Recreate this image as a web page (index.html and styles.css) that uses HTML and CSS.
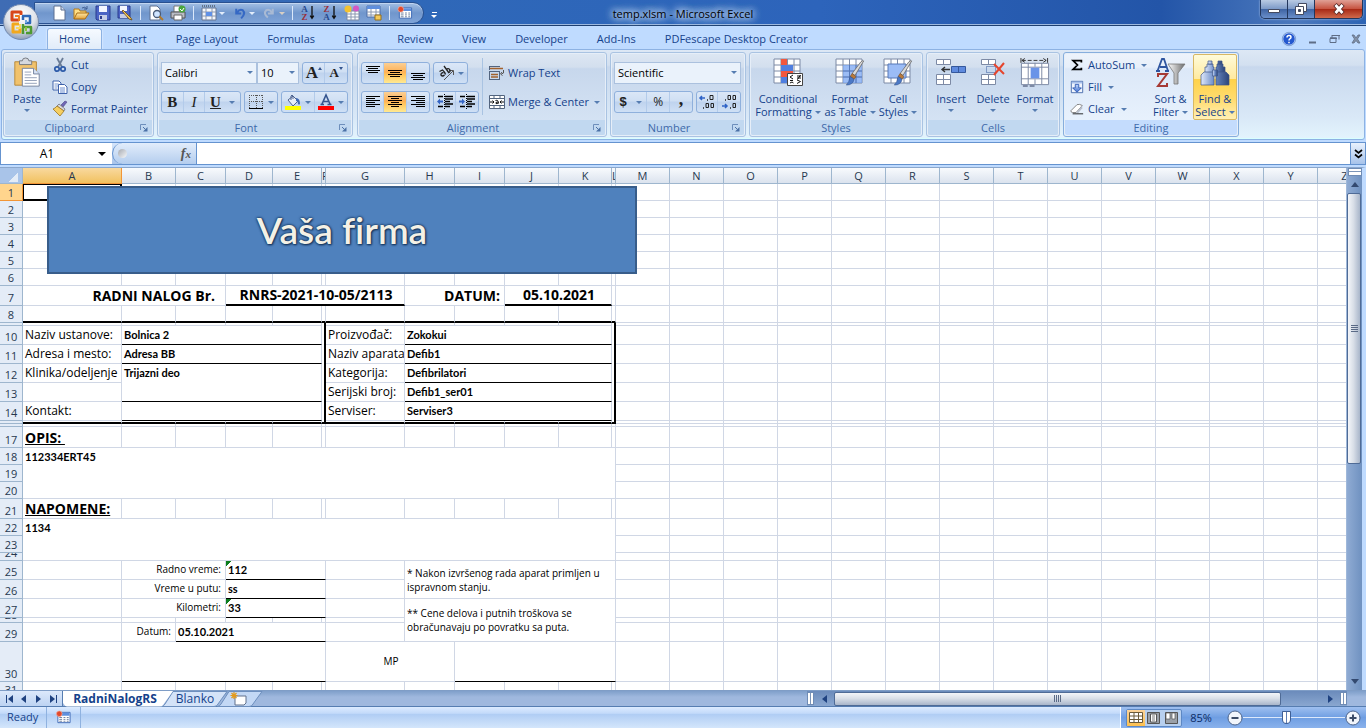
FILE: index.html
```html
<!DOCTYPE html>
<html lang="en">
<head>
<meta charset="utf-8">
<title>temp.xlsm - Microsoft Excel</title>
<link rel="stylesheet" href="styles.css">
</head>
<body>
<svg class="defs" aria-hidden="true">
  <defs>
    <linearGradient id="gBlue" x1="0" y1="0" x2="0" y2="1"><stop offset="0" stop-color="#c5d8fa"/><stop offset="1" stop-color="#3f6fd0"/></linearGradient>
    <linearGradient id="gGold" x1="0" y1="0" x2="0" y2="1"><stop offset="0" stop-color="#ffe9a6"/><stop offset="1" stop-color="#e2a13a"/></linearGradient>
    <linearGradient id="gGrey" x1="0" y1="0" x2="1" y2="0"><stop offset="0" stop-color="#fff"/><stop offset="1" stop-color="#6b6b6b"/></linearGradient>
    <linearGradient id="gSteel" x1="0" y1="0" x2="1" y2="0"><stop offset="0" stop-color="#dfe8fa"/><stop offset=".45" stop-color="#6f8fc9"/><stop offset="1" stop-color="#2c4479"/></linearGradient>
    <radialGradient id="gOrb" cx=".5" cy=".3" r=".7"><stop offset="0" stop-color="#fff"/><stop offset=".6" stop-color="#dfe3ea"/><stop offset="1" stop-color="#8e9db5"/></radialGradient>
    <symbol id="table-grid" viewBox="0 0 30 30">
      <path d="M1 1h26v24H1z" fill="#fff" stroke="#7d8aa5"/>
      <path d="M8 1v24M14.500 1v24M21 1v24M1 7h26M1 13h26M1 19h26" stroke="#7d8aa5" fill="none"/>
    </symbol>
    <symbol id="brush" viewBox="0 0 20 28">
      <path d="M19 1l-9 15-3-2L16 2q2-2 3-1z" fill="#d9d9d9" stroke="#666" stroke-width=".8"/>
      <path d="M7 14l4 3-2 3-4-3z" fill="#b97a3c" stroke="#7a4a1c" stroke-width=".6"/>
      <path d="M5 17l4 3q-1 6-8 6 3-3 4-9z" fill="#4c79c6" stroke="#2f508c" stroke-width=".6"/>
    </symbol>
    <symbol id="macro" viewBox="0 0 17 16">
      <path d="M2.500 2.500h13v11h-13z" fill="#fff" stroke="#3b67b5"/><path d="M3 3h12v3H3z" fill="#5f8fdd"/>
      <path d="M4 8h3M8.500 8h2M12 8h2M4 10h3M8.500 10h2M12 10h2M4 12h3M8.500 12h2M12 12h2" stroke="#6d7f9e"/>
      <circle cx="4" cy="4" r="3" fill="#e2492c" stroke="#f6b19f" stroke-width=".7"/>
    </symbol>
  </defs>
</svg>

<header class="titlebar">
  <button class="orb" aria-label="Office Button">
    <svg viewBox="0 0 38 38"><circle cx="19" cy="19" r="17.500" fill="url(#gOrb)" stroke="#7088b0"/>
      <g fill="none" stroke-linejoin="round">
        <path d="M17 17h-7V9h9v3" stroke="#d8461b" stroke-width="3"/><path d="M13 13h4v5" stroke="#ef7d1c" stroke-width="2"/>
        <path d="M21 17v-4h7v7h-5" stroke="#2b68b8" stroke-width="2.500"/><path d="M24 17v3" stroke="#6fa5de" stroke-width="2"/>
        <path d="M17 21h-6v8h7v-4" stroke="#f2a81c" stroke-width="3"/><path d="M14 25h4v-4" stroke="#fbd85b" stroke-width="2"/>
        <path d="M21 21v10M21 24h8v6h-5" stroke="#4d9a32" stroke-width="2.500"/><path d="M24 24v4" stroke="#8cc63f" stroke-width="2"/>
      </g>
    </svg>
  </button>
  <div class="qat">
    <button aria-label="New"><svg viewBox="0 0 16 16"><path d="M3 1h7l4 4v10H3z" fill="#fff" stroke="#5c6f90"/><path d="M10 1v4h4" fill="#cddaf0" stroke="#5c6f90"/></svg></button>
    <button aria-label="Open"><svg viewBox="0 0 16 16"><path d="M1 14V4h5l1 2h6v3" fill="#ffdf86" stroke="#b57a1a"/><path d="M1 14L4 8h12l-4 6z" fill="url(#gGold)" stroke="#a96d12"/><path d="M9 3q3-2 5 1m0-3v3h-3" fill="none" stroke="#3f5d92"/></svg></button>
    <button aria-label="Save"><svg viewBox="0 0 16 16"><path d="M1 1h14v14H2L1 14z" fill="#4a63c4" stroke="#2b3c8e"/><path d="M4 1h8v6H4z" fill="#f3f6ff"/><path d="M4 10h8v5H4z" fill="#c5cde6"/><path d="M5 11h2v3H5z" fill="#2b3c8e"/></svg></button>
    <button aria-label="Save As"><svg viewBox="0 0 16 16"><path d="M1 1h12v12H1z" fill="#4a63c4" stroke="#2b3c8e"/><path d="M3 1h7v5H3z" fill="#f3f6ff"/><path d="M3 9h7v4H3z" fill="#c5cde6"/><path d="M6 5l8 8 1 2-3-1-7-8z" fill="#f4c95a" stroke="#6b4a17" stroke-width=".8"/></svg></button>
    <i class="qsep"></i>
    <button aria-label="Print Preview"><svg viewBox="0 0 16 16"><path d="M2 1h7l3 3v11H2z" fill="#fff" stroke="#5c6f90"/><circle cx="9" cy="9" r="3.500" fill="#cfe4ff" stroke="#4a5b78" stroke-width="1.300"/><path d="M11.500 11.500L15 15" stroke="#b07a2b" stroke-width="2"/></svg></button>
    <button aria-label="Quick Print"><svg viewBox="0 0 16 16"><path d="M4 1h8v6H4z" fill="#fff" stroke="#777"/><path d="M1 7h14v6H1z" fill="#b9bcc4" stroke="#555"/><path d="M4 10h8v5H4z" fill="#fff" stroke="#666"/><circle cx="12" cy="4" r="3.500" fill="#4aa63d"/><path d="M10 4l2 2 2-3" fill="none" stroke="#fff"/></svg></button>
    <i class="qsep"></i>
    <button aria-label="Row Height"><svg viewBox="0 0 16 16"><path d="M1 3h14v12H1z" fill="#f3f6fb" stroke="#66758f"/><path d="M1 7h14M1 11h14M5 3v12M11 3v12" stroke="#8b98b0"/><path d="M5 7h6v4H5z" fill="#5f90e6"/><path d="M1 1h14" stroke="#333" stroke-dasharray="1 1"/></svg></button><i class="arrow light"></i>
    <button aria-label="Undo" class="undo"><svg viewBox="0 0 16 16"><path d="M4 2v6h6M5 7q3-5 7-3 4 4-2 10" fill="none" stroke="#3568c4" stroke-width="2.500"/></svg></button><i class="arrow light"></i>
    <button aria-label="Redo" class="redo"><svg viewBox="0 0 16 16"><path d="M12 2v6H6M11 7Q8 2 4 4q-4 4 2 9" fill="none" stroke="#a9bad4" stroke-width="2.500"/></svg></button><i class="arrow pale"></i>
    <i class="qsep"></i>
    <button aria-label="Sort Ascending" class="az"><span><b class="blue">A</b><b class="red">Z</b></span><svg viewBox="0 0 6 16"><path d="M3 0v14M1 11l2 3 2-3" fill="none" stroke="#111" stroke-width="1.500"/></svg></button>
    <button aria-label="Sort Descending" class="az"><span><b class="red">Z</b><b class="blue">A</b></span><svg viewBox="0 0 6 16"><path d="M3 0v14M1 11l2 3 2-3" fill="none" stroke="#111" stroke-width="1.500"/></svg></button>
    <button aria-label="Charts"><svg viewBox="0 0 16 16"><path d="M3 6h12v9H3z" fill="#fff" stroke="#7a89a5"/><path d="M3 9h12M3 12h12M7 6v9M11 6v9" stroke="#8b98b0"/><circle cx="4" cy="4" r="3.500" fill="#f4c22f"/><circle cx="12" cy="3.500" r="3" fill="#d457c4"/></svg></button>
    <button aria-label="Form"><svg viewBox="0 0 16 16"><path d="M1 1h13v11H1z" fill="#fff" stroke="#4b6ca8"/><path d="M1 1h13v3H1z" fill="#5f8fdd"/><path d="M1 7h13M1 10h13M5 4v8M10 4v8" stroke="#8b98b0"/><path d="M9 10h6v5H9z" fill="#f4c95a" stroke="#96701d"/></svg></button>
    <i class="qsep"></i>
    <button aria-label="Record Macro"><svg viewBox="0 0 17 16"><use href="#macro"/></svg></button>
  </div>
  <button class="qat-more" aria-label="Customize Quick Access Toolbar"><i></i><i class="arrow white"></i></button>
  <h1>temp.xlsm - Microsoft Excel</h1>
  <div class="winbtns">
    <button aria-label="Minimize"><svg viewBox="0 0 14 12"><path d="M1.500 6.500h11v3h-11z" fill="#fff" stroke="#444a60"/></svg></button>
    <button aria-label="Restore"><svg viewBox="0 0 14 12"><path d="M4.500.500h8v8h-8z" fill="#fff" stroke="#444a60"/><path d="M1.500 3.500h8v8h-8z" fill="#fff" stroke="#444a60"/><path d="M4.500 6.500h2v2h-2z" fill="#444a60" stroke="#444a60"/></svg></button>
    <button class="close" aria-label="Close"><svg viewBox="0 0 14 12"><path d="M3 1.500l8 9M11 1.500l-8 9" stroke="#5a2a28" stroke-width="4.500"/><path d="M3.500 2l7 8M10.500 2l-7 8" stroke="#fff" stroke-width="2.700"/></svg></button>
  </div>
</header>

<nav class="tabs">
  <button class="on">Home</button><button>Insert</button><button>Page Layout</button><button>Formulas</button><button>Data</button><button>Review</button><button>View</button><button>Developer</button><button>Add-Ins</button><button>PDFescape Desktop Creator</button>
  <div class="tabtools">
    <button aria-label="Help"><svg class="help" viewBox="0 0 14 14"><circle cx="7" cy="7" r="6.300" fill="#2458cf" stroke="#e8f1ff" stroke-width="1"/><circle cx="7" cy="7" r="6.700" fill="none" stroke="#4a76b8" stroke-width=".6"/><path d="M5 5.500q0-2 2-2t2 1.700q0 1-1.200 1.600Q7 7.300 7 8.500M7 9.700v1.500" fill="none" stroke="#fff" stroke-width="1.500"/></svg></button>
    <button aria-label="Minimize workbook"><svg viewBox="0 0 12 12"><path d="M3 9.500h7" stroke="#5e6d86" stroke-width="2"/></svg></button>
    <button aria-label="Restore workbook"><svg viewBox="0 0 12 12"><path d="M4 2.500h7v4M2 5.500h6v4H2zM4 2v3M2 5h6" fill="none" stroke="#5e6d86"/><path d="M4 2h8v1H4zM2 4.500h7v1.500H2z" fill="#5e6d86"/></svg></button>
    <button aria-label="Close workbook"><svg viewBox="0 0 12 12"><path d="M2 2h2l2 3 2-3h2L7.500 6 10 10H8L6 7.500 4 10H2l2.500-4z" fill="#8390a6" stroke="#5e6d86" stroke-width=".8"/></svg></button>
  </div>
</nav>

<section class="ribbon">
  <div class="group g-clip">
    <div class="gbody">
      <button class="big paste"><svg viewBox="0 0 28 32"><path d="M1 4h23v25H1z" fill="#f1c26c" stroke="#b68736"/><path d="M6 3h3q0-3 3.500-3T16 3h3v4H6z" fill="#d5d8de" stroke="#73777f"/><path d="M9 11h12l6 6v13H9z" fill="#fff" stroke="#71809c"/><path d="M21 11v6h6" fill="#d9e4f5" stroke="#71809c"/><path d="M11.500 15h7M11.500 18h7M11.500 21h13M11.500 24h13M11.500 27h13" stroke="#93a0b8"/></svg><span>Paste</span><i class="arrow"></i></button>
      <div class="smalls">
        <button><svg viewBox="0 0 16 16"><path d="M5 1l5 9M11 1L6 10" stroke="#6a7c96" stroke-width="1.800"/><circle cx="5" cy="12" r="2.200" fill="none" stroke="#2c5aa8" stroke-width="1.700"/><circle cx="11" cy="12" r="2.200" fill="none" stroke="#2c5aa8" stroke-width="1.700"/></svg>Cut</button>
        <button><svg viewBox="0 0 16 16"><path d="M1 2h6l2 2v7H1z" fill="#fff" stroke="#3e62ab"/><path d="M2.500 5h4M2.500 7h4M2.500 9h3" stroke="#7d9ad0"/><path d="M6.500 5.500h6l2.500 2.500v6.500H6.500z" fill="#fff" stroke="#3e62ab"/><path d="M8 9h5M8 11h5M8 13h5" stroke="#6d8fd0"/></svg>Copy</button>
        <button><svg viewBox="0 0 16 16"><path d="M15 1l-4 5-2-2 4-4z" fill="#6f67b5" stroke="#4a4388" stroke-width=".6"/><path d="M7 3l6 5-1 2-7-5z" fill="#d8d8e0" stroke="#666" stroke-width=".7"/><path d="M5 5l7 5-4 5L1 8q2-.500 4-3z" fill="#f6cf62" stroke="#9a7523" stroke-width=".8"/></svg>Format Painter</button>
      </div>
    </div>
    <div class="glabel">Clipboard<svg class="launch" viewBox="0 0 8 8"><path d="M.500 6V.500H6" fill="none" stroke="#6d8ebb"/><path d="M3 3l2.500 2.500" stroke="#4b71a6"/><path d="M7.500 3v4.500H3z" fill="#4b71a6"/></svg></div>
  </div>

  <div class="group g-font">
    <div class="gbody rows">
      <div class="row">
        <label class="combo c-font"><select aria-label="Font"><option>Calibri</option></select></label><label class="combo c-size"><select aria-label="Font size"><option>10</option></select></label>
        <div class="set push"><button class="serif grow" aria-label="Grow Font">A<i class="tri-up"></i></button><button class="serif shrink" aria-label="Shrink Font">A<i class="tri-down"></i></button></div>
      </div>
      <div class="row">
        <div class="set biu"><button class="serif">B</button><button class="serif it">I</button><button class="serif un wide"><u>U</u><i class="arrow"></i></button></div>
        <div class="set"><button class="wide" aria-label="Borders"><svg viewBox="0 0 16 16"><path d="M1 1.500h14M1 7.500h14M1.500 1v13M8.500 1v13M14.500 1v13" fill="none" stroke="#555" stroke-dasharray="1 1"/><path d="M1 14.500h14" stroke="#000"/></svg><i class="arrow"></i></button></div>
        <div class="set push"><button class="wide" aria-label="Fill Color"><svg viewBox="0 0 16 16"><path d="M3 6l5-4 5 5-5 5z" fill="#e8eef8" stroke="#4d6390"/><path d="M6 6V2q1-2 2 0v3" fill="none" stroke="#4d6390"/><path d="M11 4q4 0 4 6-1 1-2 0 0-3-2-3z" fill="#4069b3"/><path d="M0 12h16v4H0z" fill="#ff0"/></svg><i class="arrow"></i></button><button class="wide" aria-label="Font Color"><svg viewBox="0 0 16 16"><path d="M4 10L8 1l4 9M5.500 7.500h5M2.500 10.500h3.500M9.500 10.500h4" fill="none" stroke="#35558f" stroke-width="1.600"/><path d="M0 12h16v4H0z" fill="red"/></svg><i class="arrow"></i></button></div>
      </div>
    </div>
    <div class="glabel">Font<svg class="launch" viewBox="0 0 8 8"><path d="M.500 6V.500H6" fill="none" stroke="#6d8ebb"/><path d="M3 3l2.500 2.500" stroke="#4b71a6"/><path d="M7.500 3v4.500H3z" fill="#4b71a6"/></svg></div>
  </div>

  <div class="group g-align">
    <div class="gbody">
      <div class="rows alignrows">
        <div class="row">
          <div class="set trio"><button aria-label="Top Align"><svg viewBox="0 0 16 16"><path d="M1 1.500h14M3 3.500h10M1 5.500h14M3 7.500h10" stroke="#000"/></svg></button><button class="hot" aria-label="Middle Align"><svg viewBox="0 0 16 16"><path d="M1 5.500h14M3 7.500h10M1 9.500h14M3 11.500h10" stroke="#000"/></svg></button><button aria-label="Bottom Align"><svg viewBox="0 0 16 16"><path d="M1 8.500h14M3 10.500h10M1 12.500h14M3 14.500h10" stroke="#000"/></svg></button></div>
          <div class="set"><button class="wide" aria-label="Orientation"><svg viewBox="0 0 16 16"><path d="M6 15L15 6M15.500 10V5.500H11" fill="none" stroke="#555"/><path d="M1.500 6.500L4.500 5q2 1.500 3 4.500M5.500 7.500q-3 .5-2.500 2.500 1.500 2 3.500 0M6 1l5 7M8 4.500q2.500-2 4 .5.500 2.500-2 2.500" fill="none" stroke="#222" stroke-width="1.300"/></svg><i class="arrow"></i></button></div>
        </div>
        <div class="row">
          <div class="set trio"><button aria-label="Align Left"><svg viewBox="0 0 16 16"><path d="M1 2.500h14M1 4.500h9M1 6.500h14M1 8.500h9M1 10.500h14M1 12.500h9" stroke="#000"/></svg></button><button class="hot" aria-label="Center"><svg viewBox="0 0 16 16"><path d="M1 2.500h14M4 4.500h8M1 6.500h14M4 8.500h8M1 10.500h14M4 12.500h8" stroke="#000"/></svg></button><button aria-label="Align Right"><svg viewBox="0 0 16 16"><path d="M1 2.500h14M6 4.500h9M1 6.500h14M6 8.500h9M1 10.500h14M6 12.500h9" stroke="#000"/></svg></button></div>
          <div class="set duo"><button aria-label="Decrease Indent"><svg viewBox="0 0 16 16"><path d="M1 2.500h5M8 2.500h8M8 5h8M8 7.500h5M8 10h8M1 12.500h5M8 12.500h5" stroke="#000" stroke-width="1.500"/><path d="M7.500 0v16" stroke="#000" stroke-dasharray="1 1"/><path d="M0 7.500l3-3v2h3v2H3v2z" fill="#3565c4"/></svg></button><button aria-label="Increase Indent"><svg viewBox="0 0 16 16"><path d="M1 2.500h5M8 2.500h8M8 5h8M8 7.500h5M8 10h8M1 12.500h5M8 12.500h5" stroke="#000" stroke-width="1.500"/><path d="M7.500 0v16" stroke="#000" stroke-dasharray="1 1"/><path d="M6 7.500l-3-3v2H0v2h3v2z" fill="#3565c4"/></svg></button></div>
        </div>
      </div>
      <div class="rows wraprows">
        <button class="flat"><svg viewBox="0 0 16 16"><path d="M0 1.500h11M0 6.500h11M0 14.500h11M.500 1v4M.500 7v8M10.500 7v8" stroke="#52647f" fill="none"/><path d="M1 3.500h13M2 9.500h7M2 12h7" stroke="#a3622c" stroke-width="1.500"/><path d="M14.500 5q1 4-2 4M13 7l-1.500 2 2 1.500" fill="none" stroke="#555"/></svg>Wrap Text</button>
        <button class="flat"><svg viewBox="0 0 16 16"><path d="M.500 1.500h15v13H.500zM0 4.500h16M0 11.500h16M5 1v3M11 1v3M5 12v3M11 12v3" fill="#fff" stroke="#52647f"/><path d="M1 8h4M3.500 6.500L5 8 3.500 9.500M15 8h-4M12.500 6.500L11 8l1.500 1.500M6.500 6.500q3-1 3 3M9 8q-3 0-2 1.500 1 .500 2-.500" fill="none" stroke="#111"/></svg>Merge &amp; Center<i class="arrow"></i></button>
      </div>
    </div>
    <div class="glabel">Alignment<svg class="launch" viewBox="0 0 8 8"><path d="M.500 6V.500H6" fill="none" stroke="#6d8ebb"/><path d="M3 3l2.500 2.500" stroke="#4b71a6"/><path d="M7.500 3v4.500H3z" fill="#4b71a6"/></svg></div>
  </div>

  <div class="group g-num">
    <div class="gbody rows">
      <div class="row"><label class="combo c-num"><select aria-label="Number format"><option>Scientific</option></select></label></div>
      <div class="row">
        <div class="set nums"><button class="wide money"><b>$</b><i class="arrow"></i></button><button class="pct">%</button><button class="serif comma">,</button></div>
        <div class="set duo push"><button aria-label="Increase Decimal"><svg viewBox="0 0 16 16"><path d="M1 4h5M3 2L1 4l2 2" fill="none" stroke="#2f63c6" stroke-width="1.500"/><path d="M8 6h1M4 14h1" stroke="#222" stroke-width="1.500"/><path d="M11 1.500h3v4h-3zM7 9.500h2.500v4H7zM12 9.500h2.500v4H12z" fill="none" stroke="#222"/></svg></button><button aria-label="Decrease Decimal"><svg viewBox="0 0 16 16"><path d="M1 12h5M4 10l2 2-2 2" fill="none" stroke="#2f63c6" stroke-width="1.500"/><path d="M4 6h1M9 14h1" stroke="#222" stroke-width="1.500"/><path d="M7 1.500h2.500v4H7zM12 1.500h2.500v4H12zM12 9.500h2.500v4H12z" fill="none" stroke="#222"/></svg></button></div>
      </div>
    </div>
    <div class="glabel">Number<svg class="launch" viewBox="0 0 8 8"><path d="M.500 6V.500H6" fill="none" stroke="#6d8ebb"/><path d="M3 3l2.500 2.500" stroke="#4b71a6"/><path d="M7.500 3v4.500H3z" fill="#4b71a6"/></svg></div>
  </div>

  <div class="group g-styles">
    <div class="gbody bigs">
      <button class="big"><svg viewBox="0 0 30 30"><use href="#table-grid" width="30" height="30"/><path d="M8 1h6v6H8zM8 13h12v6H8z" fill="#f2573f"/><path d="M8 7h12v6H8zM8 19h6v6H8z" fill="#4f7fe0"/><path d="M14.500 15.500h15v12h-15z" fill="#fff" stroke="#444"/><path d="M20 17l-3 2 3 2M17 22.500h3M17 25l2-1 1.500 1M24 18h4M24 20h4M27.500 17l-3 4.500M24 22l3.500 1.500L24 25.500" fill="none" stroke="#111"/></svg><span>Conditional<br>Formatting<i class="arrow"></i></span></button>
      <button class="big"><svg viewBox="0 0 30 30"><use href="#table-grid" width="30" height="30"/><path d="M8 7h19v18H8z" fill="#79a5f2" opacity=".75"/><path d="M14.500 7v18M21 7v18M8 13h19M8 19h19" stroke="#5678b8"/><use href="#brush" x="10" y="2" width="20" height="27"/></svg><span>Format<br>as Table<i class="arrow"></i></span></button>
      <button class="big"><svg viewBox="0 0 30 30"><use href="#table-grid" width="30" height="30"/><path d="M5 6h18v14H5z" fill="#9bbcf6" stroke="#5678b8"/><use href="#brush" x="10" y="2" width="20" height="27"/></svg><span>Cell<br>Styles<i class="arrow"></i></span></button>
    </div>
    <div class="glabel">Styles</div>
  </div>

  <div class="group g-cells">
    <div class="gbody bigs">
      <button class="big"><svg viewBox="0 0 30 30"><path d="M.500 1.500h14v5H.500zM7.500 1v5M.500 16.500h14v10H.500zM.500 21.500h14M7.500 16v10" fill="#fff" stroke="#7d8aa5"/><path d="M15.500 8.500h14v6h-14z" fill="#5e8ade" stroke="#35589c"/><path d="M22.500 8v6" stroke="#35589c"/><path d="M6 11.500h8M9 9l-3 2.500L9 14" fill="none" stroke="#333" stroke-width="1.400"/></svg><span>Insert</span><i class="arrow"></i></button>
      <button class="big"><svg viewBox="0 0 30 30"><path d="M3.500 1.500h14v5h-14zM10.500 1v5M3.500 16.500h14v10h-14zM3.500 21.500h14M10.500 16v10" fill="#fff" stroke="#7d8aa5"/><path d="M8.500 8.500h9v6h-9z" fill="none" stroke="#35589c" stroke-dasharray="1 1"/><path d="M16 6l10 10M26 5L16 17" stroke="#e5452d" stroke-width="2"/></svg><span>Delete</span><i class="arrow"></i></button>
      <button class="big"><svg viewBox="0 0 31 31"><path d="M2 2.500h25" stroke="#333" stroke-dasharray="4 2"/><path d="M5 .500L2 2.500l3 2M24 .500l3 2-3 2M1 0v5M28.500 0v5" fill="none" stroke="#333"/><path d="M1.500 5.500h28v22h-28z" fill="#fff" stroke="#7d8aa5"/><path d="M8.500 5v22M22.500 5v22M1 9.500h28M1 21.500h28M15.500 5v4M15.500 22v5" fill="none" stroke="#7d8aa5"/><path d="M11 10h9v11h-9z" fill="#6a94e8"/><path d="M3 29h5M10 29h5" stroke="#7d8aa5" stroke-width="2"/></svg><span>Format</span><i class="arrow"></i></button>
    </div>
    <div class="glabel">Cells</div>
  </div>

  <div class="group g-edit lit">
    <div class="gbody">
      <div class="smalls">
        <button><svg viewBox="0 0 16 16"><path d="M13 5V3H3.500l5 5-5 5H13v-2" fill="none" stroke="#000" stroke-width="2"/></svg>AutoSum<i class="arrow"></i></button>
        <button><svg viewBox="0 0 16 16"><path d="M1.500 1.500h13v13h-13z" fill="#f1f5fd" stroke="#3f65a8"/><path d="M2 2h12v2H2z" fill="#a9c1ec"/><path d="M6 5h4v4h3l-5 5-5-5h3z" fill="url(#gBlue)" stroke="#2c57b2"/></svg>Fill<i class="arrow"></i></button>
        <button><svg viewBox="0 0 16 16"><path d="M1 10l7-7q3-1 6 1l-7 8H3q-2 0-2-2z" fill="#fff" stroke="#777"/><path d="M7 12l7-8v3l-5 6z" fill="#b8bfcc"/><path d="M3 13.500h12" stroke="#111"/></svg>Clear<i class="arrow"></i></button>
      </div>
      <button class="big sort"><svg viewBox="0 0 30 30"><path d="M1.500 13L6 1h2l4 12M4 9h6M0 13h4M9 13h4" fill="none" stroke="#2f559f" stroke-width="1.800"/><path d="M2 19v-3h9L2 28h9v-3" fill="none" stroke="#a63a35" stroke-width="2"/><path d="M12 6h17l-7 9v11h-4V15z" fill="url(#gGrey)" stroke="#777" stroke-width=".8"/></svg><span>Sort &amp;<br>Filter<i class="arrow"></i></span></button>
      <button class="big find"><svg viewBox="0 0 30 30"><g fill="url(#gSteel)" stroke="#3c5488" stroke-width=".7"><path d="M7 6h6v3h1v6H5V9h2zM17 6h6v3h2v6h-9V9h1z"/><path d="M4 14h9l1 3v10H1V17zM17 14h9l3 3v10H16V17z"/><path d="M12.500 12h5v6h-5z"/><path d="M8 3h4v3H8zM18 3h4v3h-4z"/></g></svg><span>Find &amp;<br>Select<i class="arrow"></i></span></button>
    </div>
    <div class="glabel">Editing</div>
  </div>
</section>

<section class="formulabar">
  <div class="namebox"><input aria-label="Name Box" value="A1"><button aria-label="Names"><i class="arrow black"></i></button></div>
  <div class="fxpill"><i class="knob"></i><button class="fx" aria-label="Insert Function"><em>f</em><sub>x</sub></button></div>
  <input class="formula" aria-label="Formula">
  <button class="expand" aria-label="Expand Formula Bar"><svg viewBox="0 0 9 10"><path d="M1 1l3.500 3L8 1M1 5.500l3.500 3 3.500-3" fill="none" stroke="#000" stroke-width="1.700"/></svg></button>
</section>

<main class="workspace">
  <div class="sheet">
    <table class="grid">
      <colgroup><col class="w23"><col class="w99"><col class="w54"><col class="w50"><col class="w47"><col class="w49"><col class="w4"><col class="w79"><col class="w50"><col class="w50"><col class="w54"><col class="w53"><col class="w4"><col class="w54" span="14"></colgroup>
      <thead><tr id="letters"><th class="corner"></th><th class="sel">A</th><th>B</th><th>C</th><th>D</th><th>E</th><th class="thin"><span>F</span></th><th>G</th><th>H</th><th>I</th><th>J</th><th>K</th><th class="thin"><span>L</span></th></tr></thead>
      <tbody id="cells">
        <tr class="h17"><th class="sel">1</th><td class="active"></td><td></td><td></td><td></td><td></td><td></td><td></td><td></td><td></td><td></td><td></td><td></td></tr>
        <tr class="h17"><th>2</th><td></td><td></td><td></td><td></td><td></td><td></td><td></td><td></td><td></td><td></td><td></td><td></td></tr>
        <tr class="h17"><th>3</th><td></td><td></td><td></td><td></td><td></td><td></td><td></td><td></td><td></td><td></td><td></td><td></td></tr>
        <tr class="h17"><th>4</th><td></td><td></td><td></td><td></td><td></td><td></td><td></td><td></td><td></td><td></td><td></td><td></td></tr>
        <tr class="h17"><th>5</th><td></td><td></td><td></td><td></td><td></td><td></td><td></td><td></td><td></td><td></td><td></td><td></td></tr>
        <tr class="h17"><th>6</th><td></td><td></td><td></td><td></td><td></td><td></td><td></td><td></td><td></td><td></td><td></td><td></td></tr>
        <tr class="h20"><th>7</th><td colspan="3" class="head right wideright">RADNI NALOG Br.</td><td colspan="4" class="head center thick">RNRS-2021-10-05/2113</td><td colspan="2" class="head right">DATUM:</td><td colspan="2" class="head center thick">05.10.2021</td><td></td></tr>
        <tr class="h17 boxtop"><th>8</th><td></td><td></td><td></td><td></td><td></td><td></td><td></td><td></td><td></td><td></td><td></td><td></td></tr>
        <tr class="h3"><th></th><td></td><td></td><td></td><td></td><td></td><td class="edge"></td><td></td><td></td><td></td><td></td><td></td><td class="edge"></td></tr>
        <tr class="h19"><th>10</th><td>Naziv ustanove:</td><td colspan="4" class="val line">Bolnica 2</td><td class="edge"></td><td>Proizvođač:</td><td colspan="4" class="val line">Zokokui</td><td class="edge"></td></tr>
        <tr class="h19"><th>11</th><td>Adresa i mesto:</td><td colspan="4" class="val line">Adresa BB</td><td class="edge"></td><td>Naziv aparata</td><td colspan="4" class="val line">Defib1</td><td class="edge"></td></tr>
        <tr class="h19"><th>12</th><td>Klinika/odeljenje</td><td colspan="4" rowspan="2" class="val line top">Trijazni deo</td><td class="edge"></td><td>Kategorija:</td><td colspan="4" class="val line">Defibrilatori</td><td class="edge"></td></tr>
        <tr class="h19"><th>13</th><td></td><td class="edge"></td><td>Serijski broj:</td><td colspan="4" class="val line">Defib1_ser01</td><td class="edge"></td></tr>
        <tr class="h19"><th>14</th><td>Kontakt:</td><td colspan="4" class="val line"></td><td class="edge"></td><td>Serviser:</td><td colspan="4" class="val line">Serviser3</td><td class="edge"></td></tr>
        <tr class="h3 boxbottom"><th></th><td></td><td></td><td></td><td></td><td></td><td class="corner-edge"></td><td></td><td></td><td></td><td></td><td></td><td class="corner-edge"></td></tr>
        <tr class="h3"><th></th><td></td><td></td><td></td><td></td><td></td><td></td><td></td><td></td><td></td><td></td><td></td><td></td></tr>
        <tr class="h21"><th>17</th><td class="head"><u>OPIS:&nbsp;</u></td><td></td><td></td><td></td><td></td><td></td><td></td><td></td><td></td><td></td><td></td><td></td></tr>
        <tr class="h17"><th>18</th><td colspan="12" rowspan="3" class="val top">112334ERT45</td></tr>
        <tr class="h17"><th>19</th></tr>
        <tr class="h17"><th>20</th></tr>
        <tr class="h20"><th>21</th><td class="head"><u>NAPOMENE:</u></td><td></td><td></td><td></td><td></td><td></td><td></td><td></td><td></td><td></td><td></td><td></td></tr>
        <tr class="h17"><th>22</th><td colspan="12" rowspan="3" class="val top">1134</td></tr>
        <tr class="h17"><th>23</th></tr>
        <tr class="h8"><th><span class="clip">24</span></th></tr>
        <tr class="h19"><th>25</th><td></td><td colspan="2" class="small right">Radno vreme:</td><td colspan="3" class="val line flag">112</td><td></td><td colspan="5" rowspan="2" class="note">* Nakon izvršenog rada aparat primljen u ispravnom stanju.</td></tr>
        <tr class="h19"><th>26</th><td></td><td colspan="2" class="small right">Vreme u putu:</td><td colspan="3" class="val line">ss</td><td></td></tr>
        <tr class="h19"><th>27</th><td></td><td colspan="2" class="small right">Kilometri:</td><td colspan="3" class="val line flag">33</td><td></td><td colspan="5" rowspan="3" class="note">** Cene delova i putnih troškova se obračunavaju po povratku sa puta.</td></tr>
        <tr class="h5"><th><span class="clip">28</span></th><td></td><td></td><td></td><td></td><td></td><td></td><td></td></tr>
        <tr class="h19"><th>29</th><td></td><td class="small right">Datum:</td><td colspan="4" class="val line">05.10.2021</td><td></td></tr>
        <tr class="h40"><th>30</th><td></td><td colspan="5" class="line"></td><td colspan="2" class="small center">MP</td><td colspan="4" class="line"></td></tr>
        <tr class="h17"><th class="cut">31</th><td></td><td></td><td></td><td></td><td></td><td></td><td></td><td></td><td></td><td></td><td></td><td></td></tr>
      </tbody>
    </table>
    <div class="banner">Vaša firma</div>
  </div>
  <div class="vscroll">
    <i class="split"></i>
    <button aria-label="Scroll up"><i class="tri up"></i></button>
    <div class="vtrack"><div class="vthumb"><i></i></div></div>
    <button aria-label="Scroll down"><i class="tri down"></i></button>
  </div>
</main>

<div class="sheetbar">
  <div class="sheetnav">
    <button aria-label="First sheet"><i class="bar"></i><i class="tri left"></i></button><button aria-label="Previous sheet"><i class="tri left"></i></button><button aria-label="Next sheet"><i class="tri rightw"></i></button><button aria-label="Last sheet"><i class="tri rightw"></i><i class="bar"></i></button>
  </div>
  <div class="sheettabs">
    <button class="stab on"><svg viewBox="0 0 110 16" preserveAspectRatio="none"><path d="M0 0h110L100 14q-1 1.500-3 1.500H4Q2 15.500 0 12z" fill="#fff"/></svg><span>RadniNalogRS</span></button>
    <button class="stab"><svg viewBox="0 0 68 16" preserveAspectRatio="none"><path d="M.500 15.500Q3 15 4 13L12 .500h54L57 13q-1 2.500-4 2.500z" fill="#d4e3f8" stroke="#6d8fbe"/></svg><span>Blanko</span></button>
    <button class="stab new" aria-label="Insert Worksheet"><svg viewBox="0 0 46 16" preserveAspectRatio="none"><path d="M.500 15.500Q3 15 4 13L12 .500h33L36 13q-1 2.500-4 2.500z" fill="#c3d8f5" stroke="#6d8fbe"/><path d="M18 5h11v7l-2 2h-9z" fill="#fff" stroke="#61718c"/><path d="M17 1v7M13.500 4.500h7M14.500 2l5 5M19.500 2l-5 5" stroke="#e39a1b" stroke-width="1.200"/></svg></button>
  </div>
  <div class="hscroll">
    <i class="hsplit"></i>
    <button aria-label="Scroll left"><i class="tri left"></i></button>
    <div class="htrack"><div class="hthumb"><i></i></div></div>
    <button aria-label="Scroll right"><i class="tri rightw"></i></button>
    <i class="hsplit"></i>
  </div>
</div>

<footer class="status">
  <span class="ready">Ready</span>
  <button class="rec" aria-label="Record Macro"><svg viewBox="0 0 17 16"><use href="#macro"/></svg></button>
  <div class="zoombar">
    <div class="views">
      <button class="on" aria-label="Normal"><svg viewBox="0 0 14 12"><path d="M.500 .500h13v10H.500zM0 4h14M0 7.500h14M5 0v11M9.500 0v11" fill="#fff" stroke="#6a5a3a"/></svg></button><button aria-label="Page Layout"><svg viewBox="0 0 14 12"><path d="M.500 .500h12v11H.500z" fill="#9aa0a8" stroke="#555"/><path d="M3.500 2h6v8h-6z" fill="#fff" stroke="#555"/><path d="M5 4h3M5 6h3M5 8h3" stroke="#777"/></svg></button><button aria-label="Page Break Preview"><svg viewBox="0 0 14 12"><path d="M.500 .500h12v11H.500z" fill="#9aa0a8" stroke="#555"/><path d="M1 1h4v6H1zM7 1h3v6H7z" fill="#fff" stroke="#555" stroke-width=".7"/></svg></button>
    </div>
    <button class="pctbtn">85%</button>
    <button class="zb" aria-label="Zoom out"><svg viewBox="0 0 16 16"><circle cx="8" cy="8" r="7" fill="#f1f5fb" stroke="#4c648c"/><path d="M4.500 8h7" stroke="#3b4b66" stroke-width="2"/></svg></button>
    <input type="range" min="0" max="100" value="42" aria-label="Zoom">
    <button class="zb" aria-label="Zoom in"><svg viewBox="0 0 16 16"><circle cx="8" cy="8" r="7" fill="#f1f5fb" stroke="#4c648c"/><path d="M4.500 8h7M8 4.500v7" stroke="#3b4b66" stroke-width="2"/></svg></button>
  </div>
</footer>
<script src="grid.js"></script>
</body>
</html>
```
FILE: grid.js
```js
// Columns M to Z hold no data: add their letters and empty cells.
const extra = "MNOPQRSTUVWXYZ".split("");
const letters = document.getElementById("letters");
for (const letter of extra) {
  const th = document.createElement("th");
  th.textContent = letter;
  letters.append(th);
}
for (const row of document.getElementById("cells").rows) {
  for (const _ of extra) {
    const td = document.createElement("td");
    td.className = "free";
    row.append(td);
  }
}
```
FILE: styles.css
```css
* { box-sizing: border-box; }
html, body { height: 100%; }
body { margin: 0; display: flex; flex-direction: column; overflow: hidden; background: #bfdbff; color: #15428b; font: 11px/14px "Open Sans", "Noto Sans", sans-serif; }
button { margin: 0; padding: 0; border: 0; background: none; color: inherit; font: inherit; display: flex; align-items: center; justify-content: center; white-space: nowrap; }
input, select { font: inherit; color: #000; margin: 0; border: 0; border-radius: 0; }
svg { display: block; flex: none; overflow: visible; }
.defs { width: 0; height: 0; position: absolute; }

.arrow { display: inline-block; flex: none; width: 0; height: 0; border: 3px solid transparent; border-top: 3px solid #567db1; border-bottom: 0; }
.arrow.light { border-top-color: #e3edfb; }
.arrow.pale { border-top-color: #d8cfc4; }
.arrow.white { border-top-color: #fff; }
.arrow.black { border-width: 4px 4px 0; border-top-color: #000; }
.tri { display: block; width: 0; height: 0; border: 4px solid transparent; }
.tri.up { border-top: 0; border-bottom: 5px solid #33496f; }
.tri.down { border-bottom: 0; border-top: 5px solid #33496f; }
.tri.left { border-left: 0; border-right: 5px solid #1f4280; }
.tri.rightw { border-right: 0; border-left: 5px solid #1f4280; }

/* title bar */
.titlebar { position: relative; display: flex; flex: none; height: 26px; background: linear-gradient(90deg, #3f6cb4 0, #2f68b8 30%, #2d64bb 60%, #2355a8 85%, #4c79bd 95%, #2d64b4 100%); border-bottom: 1px solid #1e3f70; box-shadow: inset 0 -1px #9db9df; }
.orb { position: absolute; left: 2px; top: 3px; width: 38px; height: 38px; z-index: 2; }
.orb svg { width: 38px; height: 38px; }
.qat { display: flex; align-items: center; gap: 6px; height: 22px; margin: 2px 0 0 34px; padding: 0 10px 0 16px; border: 1px solid #29508f; border-radius: 0 12px 12px 0; background: linear-gradient(#a3bfe4, #7096cc 50%, #7fa4d8); box-shadow: inset 0 1px #c1d5f0; }
.qat button { width: 16px; height: 16px; }
.qat svg { width: 16px; height: 16px; }
.qat .arrow { margin-left: -4px; }
.qat .undo svg, .qat .redo svg { width: 13px; height: 13px; }
.qsep { width: 1px; height: 14px; margin: 0 1px; background: #dbe8fa; }
.qat .az { gap: 1px; }
.qat .az svg { width: 6px; height: 14px; }
.az span { display: flex; flex-direction: column; font: bold 9px/8px "Liberation Serif", serif; }
.blue { color: #27488c; }
.red { color: #9a3038; }
.qat-more { flex-direction: column; gap: 2px; width: 20px; padding-top: 4px; }
.qat-more i:first-child { width: 5px; height: 1px; background: #fff; }
.titlebar h1 { position: absolute; left: 0; right: 0; top: 6px; margin: 0; text-align: center; color: #000; font-size: 11px; line-height: 15px; font-weight: 400; pointer-events: none; text-shadow: 0 0 6px #dfeafa, 0 0 8px #cfe0f8, 0 0 10px #cfe0f8, 0 0 12px #a9c6ee; }
.winbtns { display: flex; height: 19px; margin: 0 3px 0 auto; border: 1px solid #22365c; border-top: 0; border-radius: 0 0 5px 5px; overflow: hidden; box-shadow: 0 0 2px #c5d9f3; z-index: 1; }
.winbtns button { width: 27px; background: linear-gradient(#b9cae3, #7e9bc8 48%, #3f64a3 52%, #6a8fca); border-right: 1px solid #22365c; }
.winbtns .close { width: 47px; border: 0; background: linear-gradient(#e0a095, #c75441 48%, #a82a16 52%, #cf6a4c); }
.winbtns svg { width: 14px; height: 12px; }

/* ribbon tabs */
.tabs { display: flex; flex: none; gap: 1px; height: 23px; padding: 2px 4px 0 47px; }
.tabs > button { padding: 0 14px; }
.tabs > .on { padding: 0 11px; border: 1px solid #8db2e3; border-bottom: 0; border-radius: 3px 3px 0 0; background: linear-gradient(#f6faff, #e1ecf9); box-shadow: 0 0 2px #fff; }
.tabtools { display: flex; align-items: center; gap: 10px; margin-left: auto; }
.tabtools svg { width: 12px; height: 12px; }
.tabtools .help { width: 14px; height: 14px; }

/* ribbon */
.ribbon { display: flex; flex: none; gap: 3px; height: 91px; margin: 0 1px; padding: 2px 1px; border: 1px solid #8db2e3; border-radius: 3px; background: linear-gradient(#dde8f5 0, #d3e0f0 17%, #c8d8ed 19%, #d9e8f7 75%, #e3f4fd 100%); box-shadow: inset 0 -1px #d8ffff; }
.group { display: flex; flex-direction: column; flex: none; border: 1px solid #a9c3e2; border-radius: 3px; background: linear-gradient(#dde7f3 0, #d3dfee 17%, #c7d7ec 19%, #d8e6f6 100%); box-shadow: inset 0 0 0 1px #e6eef8; }
.group.lit { border-color: #86aedd; background: linear-gradient(#edf3fb 0, #e7effa 17%, #dce8f8 19%, #ebf4fe 100%); }
.gbody { display: flex; flex: 1; min-height: 0; }
.glabel { position: relative; flex: none; height: 15px; line-height: 16px; margin: 0 1px 1px; text-align: center; color: #3e6aaa; background: #c1d8f0; border-radius: 0 0 2px 2px; padding-right: 18px; }
.g-styles .glabel, .g-cells .glabel, .g-edit .glabel { padding-right: 0; }
.lit .glabel { background: #c4dcfd; }
.launch { position: absolute; right: 4px; top: 4px; width: 8px; height: 8px; }
.g-clip { width: 151px; }
.g-font { width: 196px; margin-right: 1px; }
.g-align { width: 250px; }
.g-num { width: 136px; }
.g-styles { width: 174px; }
.g-cells { width: 134px; }
.g-edit { width: 176px; }

.big { flex-direction: column; justify-content: flex-start; padding-top: 5px; text-align: center; line-height: 13px; }
.big svg { width: 30px; height: 30px; margin-bottom: 4px; }
.big > .arrow { margin-top: 4px; }
.big span .arrow { margin: 0 0 2px 3px; }
.paste { width: 46px; }
.bigs { padding-left: 3px; }
.g-styles .big { width: 54px; }
.g-styles .big:first-child { width: 70px; }
.g-styles .big:last-child { width: 42px; }
.g-cells .big { width: 42px; }
.sort { width: 45px; }
.find { width: 44px; height: 66px; margin-top: 1px; padding-top: 3px; border: 1px solid #d8b864; border-radius: 2px; background: linear-gradient(#fffbd9 0, #ffeaa0 37%, #ffd24a 38%, #ffdc70 70%, #fff0b5 100%); }
.smalls { display: flex; flex-direction: column; padding: 1px 0 0 2px; }
.smalls button { justify-content: flex-start; gap: 3px; height: 22px; }
.smalls svg { width: 16px; height: 16px; }
.smalls .arrow { margin-left: 2px; }
.g-edit .smalls { width: 84px; padding-left: 6px; }
.g-edit .smalls svg { width: 14px; height: 14px; }
.g-edit .smalls button { gap: 4px; }

.rows { display: flex; flex-direction: column; gap: 7px; padding: 9px 4px 0 3px; }
.row { display: flex; gap: 3px; height: 22px; }
.push { margin-left: auto; }
.combo { position: relative; display: flex; }
.combo select { appearance: none; width: 100%; height: 22px; padding: 0 3px; border: 1px solid #abc1de; background: #eaf2fb; }
.combo::after { content: ""; position: absolute; right: 4px; top: 9px; border: 3px solid transparent; border-top-color: #567db1; border-bottom: 0; }
.c-font { width: 97px; margin-right: -3px; }
.c-size { width: 43px; }
.c-num { width: 128px; }
.set { display: flex; border: 1px solid #8fb0dc; border-radius: 3px; background: linear-gradient(#dbe7f7 0, #cfdff3 45%, #bfd3ee 50%, #cfe0f5 100%); overflow: hidden; }
.set button { width: 22px; color: #222; border-right: 1px solid #b3cbea; }
.set button:last-child { border-right: 0; }
.set svg { width: 16px; height: 16px; }
.set .wide { width: 33px; gap: 4px; }
.set .hot { background: linear-gradient(#fbcf93, #fdb055 45%, #ffc75f 60%, #ffe992); }
.set.trio { width: 69px; }
.set.trio button { width: 23px; }
.serif { font: bold 15px/18px "Liberation Serif", serif; }
.set .it { font-style: italic; font-weight: 400; }
.set .un { gap: 8px; width: 35px; }
.biu { width: 81px; }
.set .grow { font-size: 17px; }
.set .shrink { font-size: 13px; }
.tri-up, .tri-down { border: 2px solid transparent; align-self: flex-start; margin-top: 4px; }
.tri-up { border-top: 0; border-bottom: 3px solid #35558f; }
.tri-down { border-bottom: 0; border-top: 3px solid #35558f; }
.set .money { gap: 9px; }
.money b { font: bold 13px/16px "Liberation Sans", sans-serif; }
.set .pct { font-size: 12px; width: 23px; }
.set .comma { font-size: 18px; line-height: 12px; padding-bottom: 6px; }
.g-align .gbody { gap: 0; }
.alignrows { width: 124px; padding-right: 0; }
.wraprows { padding: 4px 0 0 6px; border-left: 1px solid #a9c3e2; margin: 5px 0; }
.flat { height: 22px; gap: 3px; justify-content: flex-start; }
.flat svg { width: 16px; height: 16px; }
.flat .arrow { margin-left: 2px; }

/* formula bar */
.formulabar { display: flex; flex: none; height: 23px; margin-top: 2px; border: 1px solid #6593cf; border-width: 1px 0 1px 1px; background: linear-gradient(#d5e5fa, #a9c4ea); }
.namebox { display: flex; width: 111px; background: #fff; }
.namebox input { width: 92px; text-align: center; background: none; font-size: 12px; padding: 0; }
.namebox button { width: 18px; }
.fxpill { display: flex; align-items: center; justify-content: space-between; width: 85px; padding: 0 5px; background: linear-gradient(#e2edfb, #b4cdee); border: 1px solid #6593cf; border-width: 0 1px; border-radius: 12px 0 0 12px; }
.knob { width: 9px; height: 9px; border-radius: 50%; background: linear-gradient(135deg, #a5a9b0, #f7f9fc); }
.fx { font: italic bold 14px/16px "Liberation Serif", serif; color: #555; }
.fx sub { font-size: 11px; line-height: 8px; }
.formula { flex: 1; min-width: 0; background: #fff; padding: 0 4px; }
.expand { width: 16px; border: 1px solid #6593cf; border-width: 0 1px; background: linear-gradient(#e8f1fd, #a7c3ea); }
.expand svg { width: 9px; height: 10px; }

/* worksheet */
.workspace { display: flex; flex: 1; min-height: 0; margin-top: 2px; border-top: 1px solid #8ba7cc; border-right: 4px solid #bfdbff; }
.sheet { position: relative; flex: 1; min-width: 0; overflow: hidden; background: #fff; }
.grid { table-layout: fixed; width: 1px; border-collapse: separate; border-spacing: 0; color: #000; }
.w4 { width: 4px; } .w23 { width: 23px; } .w47 { width: 47px; } .w49 { width: 49px; } .w50 { width: 50px; }
.w53 { width: 53px; } .w54 { width: 54px; } .w79 { width: 79px; } .w99 { width: 99px; }
.grid td, .grid th { padding: 0; border: 0 solid #d0d7e5; border-width: 0 1px 1px 0; overflow: hidden; white-space: nowrap; }
.grid td { padding: 0 0 0 2px; vertical-align: top; font-size: 12px; line-height: 17px; }
.grid th { font-weight: 400; line-height: 15px; color: #27384f; background: #e4ecf7; border-color: #9eb6ce; vertical-align: bottom; }
.grid thead th { height: 16px; background: linear-gradient(#f8fafd, #dbe3ee); vertical-align: middle; }
.grid thead .sel { background: linear-gradient(#f9d99f, #f1c15f); border-color: #f29536; }
.grid tbody .sel { background: #ffd58d; border-color: #f29536; }
.grid .corner { background: linear-gradient(135deg, transparent 70%, #e4ecf7 71%) 0 0 / 18px 14px no-repeat #a9c4e9; }
.thin span { display: block; width: 3px; overflow: hidden; }
.h3 { height: 3px; } .h5 { height: 5px; } .h8 { height: 8px; } .h17 { height: 17px; } .h19 { height: 19px; }
.h20 { height: 20px; } .h21 { height: 21px; } .h40 { height: 40px; }
.clip { display: flex; justify-content: center; align-items: flex-end; height: 7px; overflow: hidden; }
.h5 .clip { height: 4px; }
.grid .cut { vertical-align: top; }
.grid .active { box-shadow: inset 1px 1px #000, inset -1px -1px #000; border-color: #000; }
.grid td:empty { padding: 0; }
.grid .right { text-align: right; padding-right: 4px; }
.grid .wideright { padding-right: 10px; }
.grid .center { text-align: center; }
.grid .head { font-weight: 700; font-size: 14px; line-height: 19px; vertical-align: bottom; }
.grid .thick { line-height: 18px; }
.grid .val { font-family: Lato, "Open Sans", sans-serif; font-size: 11px; font-weight: 700; }
.grid .small { font-size: 10px; }
.h40 .small { vertical-align: middle; }
.grid .note { font-size: 10px; line-height: 14px; white-space: normal; vertical-align: middle; }
.grid .line { border-bottom-color: #000; }
.grid .thick { border-bottom: 2px solid #000; }
.boxtop td:not(.free), .boxbottom td:not(.free) { border-bottom: 2px solid #000; }
.grid .edge { border-right: 2px solid #000; border-bottom: 0; padding: 0; }
.grid .corner-edge { border-right: 2px solid #000; }
.grid .flag { background: linear-gradient(135deg, #0a7d1c 4px, transparent 4px); }
.banner { position: absolute; left: 47px; top: 18px; width: 590px; height: 88px; display: flex; align-items: center; justify-content: center; border: 2px solid #385d8a; background: #4f81bd; color: #f4f1e6; font: 600 37px/48px Lato, "Open Sans", sans-serif; font-variant-ligatures: none; text-shadow: 0 0 2px #17365d, 1px 1px 2px #17365d, 0 0 3px #17365d; }

.vscroll { display: flex; flex-direction: column; align-items: center; flex: none; width: 16px; background: linear-gradient(90deg, #8fabd3, #6f91c0); border-left: 1px solid #9fb8da; }
.vscroll button { flex: none; width: 15px; height: 17px; }
.split { flex: none; width: 14px; height: 8px; border: 1px solid #6f8cb5; background: linear-gradient(#fff 2px, #7c95b8 2px 3px, #fff 3px); }
.vtrack { flex: 1; width: 15px; min-height: 0; }
.vthumb { display: flex; align-items: center; justify-content: center; width: 14px; height: 56.5%; border: 1px solid #4f6b96; border-radius: 2px; background: linear-gradient(90deg, #f3f5f9, #d9dfe8 45%, #a9b6ca); }
.vthumb i { width: 7px; height: 8px; background: repeating-linear-gradient(#5a6a86 0 1px, transparent 1px 2px); }

/* sheet tabs and horizontal scroll */
.sheetbar { display: flex; flex: none; height: 17px; border-top: 1px solid #7f9dc6; background: linear-gradient(#7f9fca, #9fb8de 40%); border-bottom: 1px solid #567db1; }
.sheetnav { display: flex; flex: none; width: 63px; padding-left: 1px; border-right: 1px solid #567db1; background: linear-gradient(#dce9fb, #bdd3f2); }
.sheetnav button { width: 15px; }
.sheetnav .bar { width: 1px; height: 8px; background: #1f4280; margin: 0 1px; }
.sheettabs { display: flex; }
.stab { position: relative; width: 68px; height: 16px; margin-right: -12px; font-size: 12px; }
.stab svg { position: absolute; left: 0; top: 0; width: 100%; height: 16px; }
.stab span { position: relative; }
.stab.on { width: 110px; padding-right: 6px; font-weight: 700; z-index: 1; }
.stab.new { width: 46px; }
.hscroll { display: flex; align-items: center; width: 39.5%; min-width: 0; margin: 0 19px 0 auto; background: linear-gradient(#6b8bbb, #8aa7d0); }
.hsplit { flex: none; width: 7px; height: 13px; border: 1px solid #6f8cb5; background: linear-gradient(90deg, #fff 2px, #7c95b8 2px 3px, #fff 3px); }
.hscroll button { flex: none; width: 20px; height: 15px; }
.htrack { flex: 1; min-width: 0; height: 14px; }
.hthumb { display: flex; align-items: center; justify-content: center; width: 92%; height: 14px; border: 1px solid #4f6b96; border-radius: 2px; background: linear-gradient(#f3f5f9, #d9dfe8 45%, #a9b6ca); }
.hthumb i { width: 8px; height: 7px; background: repeating-linear-gradient(90deg, #5a6a86 0 1px, transparent 1px 2px); }

/* status bar */
.status { display: flex; align-items: stretch; flex: none; height: 21px; background: linear-gradient(#dcebff, #c3dafa 30%, #b0cdf4 35%, #d4e6fb); }
.ready { padding: 3px 8px 0 7px; border-right: 1px solid #8fb2e0; }
.rec { width: 34px; border-right: 1px solid #8fb2e0; }
.rec svg { width: 17px; height: 15px; }
.zoombar { display: flex; align-items: center; margin-left: auto; width: 246px; padding: 0 5px; border-left: 1px solid #fff; background: linear-gradient(#9fc0f0, #6f9ee2 50%, #8ab2ec); }
.views { display: flex; height: 18px; border: 1px solid #5d88c4; border-radius: 2px; background: #b7cfee; }
.views button { width: 18px; }
.views .on { background: linear-gradient(#fbd39a, #fdc04f); }
.views svg { width: 14px; height: 12px; }
.pctbtn { width: 38px; margin-right: 7px; color: #0b2b66; }
.zb { width: 16px; height: 16px; }
.zb svg { width: 16px; height: 16px; }
.zoombar input { appearance: none; flex: 1; min-width: 0; height: 16px; margin: 0; background: linear-gradient(#dce9fc, #dce9fc) 50% 50% / 100% 1px no-repeat; }
.zoombar input::-webkit-slider-thumb { appearance: none; width: 9px; height: 13px; border: 1px solid #3f5f95; border-radius: 1px 1px 5px 5px; background: linear-gradient(90deg, #fff 3px, #5d7db3 3px 4px, #fff 4px); }
```
